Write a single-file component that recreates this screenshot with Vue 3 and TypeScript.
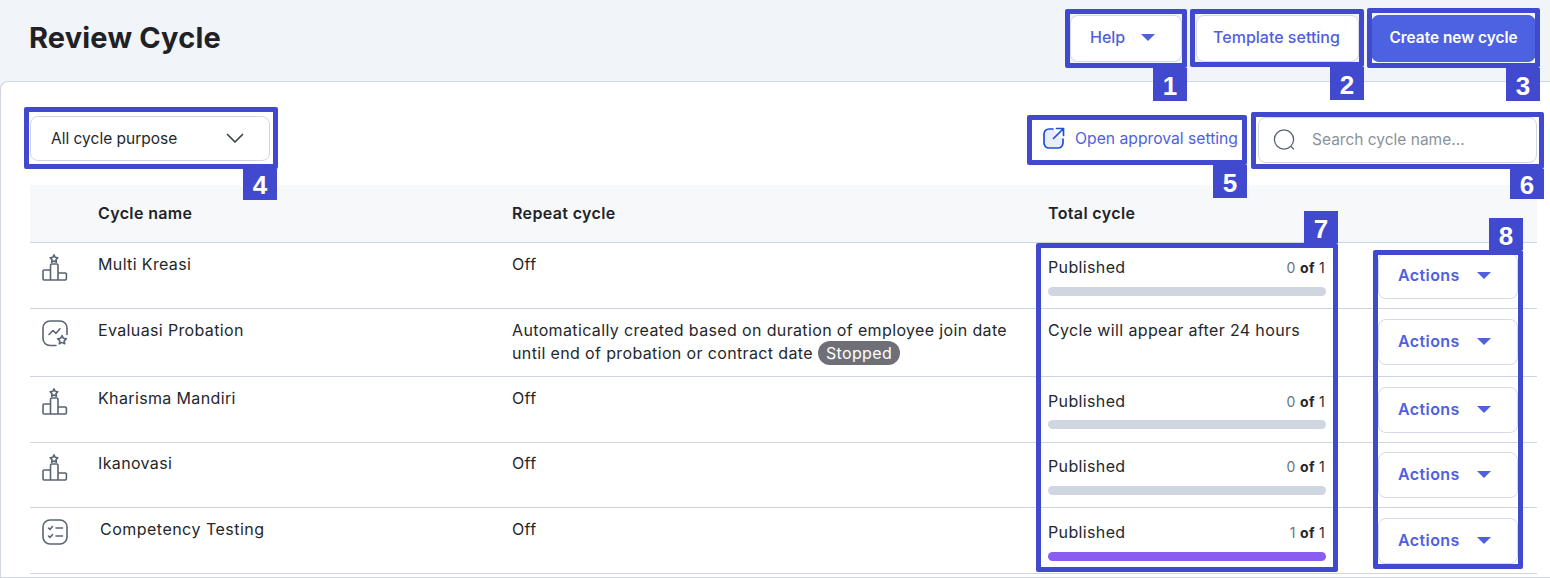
<script setup lang="ts">
interface Row {
  name: string
  icon: 'podium' | 'chart' | 'list'
  repeat: string
  stopped?: boolean
  done?: number
  shifted?: boolean
}

const rows: Row[] = [
  { name: 'Multi Kreasi', icon: 'podium', repeat: 'Off', done: 0 },
  {
    name: 'Evaluasi Probation',
    icon: 'chart',
    repeat: 'Automatically created based on duration of employee join date until end of probation or contract date',
    stopped: true,
  },
  { name: 'Kharisma Mandiri', icon: 'podium', repeat: 'Off', done: 0 },
  { name: 'Ikanovasi', icon: 'podium', repeat: 'Off', done: 0 },
  { name: 'Competency Testing', icon: 'list', repeat: 'Off', done: 1, shifted: true },
]

const marks: number[] = [1, 2, 3, 4, 5, 6, 7, 8]
</script>

<template>
  <div class="page">
    <header class="top">
      <h1 class="title">Review Cycle</h1>
      <div class="top-actions">
        <button class="btn btn-help"><span class="btn-label">Help</span><span class="caret"></span></button>
        <button class="btn btn-template"><span class="btn-label">Template setting</span></button>
        <button class="btn btn-create">Create new cycle</button>
      </div>
    </header>

    <main class="card">
      <div class="toolbar">
        <div class="select">
          <span>All cycle purpose</span>
          <svg class="chevron" width="18" height="11" viewBox="0 0 18 11" fill="none">
            <path d="M1.500 1.500 9 9l7.500-7.500" stroke="#3f444c" stroke-width="1.700" stroke-linecap="round" stroke-linejoin="round" />
          </svg>
        </div>
        <div class="tools">
          <a class="approval">
            <svg width="23" height="23" viewBox="0 0 23 23" fill="none">
              <path d="M11 2H7a5 5 0 0 0-5 5v9a5 5 0 0 0 5 5h9a5 5 0 0 0 5-5v-4" fill="#e9ecfb" stroke="#1f4fd8" stroke-width="1.700" stroke-linecap="round" />
              <path d="M11.500 11.500 21 2M14.500 1.500h7v7" stroke="#1f4fd8" stroke-width="1.700" stroke-linecap="round" stroke-linejoin="round" />
            </svg>
            <span>Open approval setting</span>
          </a>
          <div class="search">
            <svg width="24" height="22" viewBox="0 0 24 22" fill="none">
              <circle cx="11" cy="10.500" r="9.600" stroke="#5b6472" stroke-width="1.300" />
              <path d="M18.500 18 20.500 20" stroke="#5b6472" stroke-width="1.300" stroke-linecap="round" />
            </svg>
            <span>Search cycle name...</span>
          </div>
        </div>
      </div>

      <div class="table">
        <div class="row head">
          <div></div>
          <div>Cycle name</div>
          <div>Repeat cycle</div>
          <div>Total cycle</div>
          <div></div>
        </div>
        <div v-for="row in rows" :key="row.name" class="row body-row">
          <div class="icon-cell">
            <svg v-if="row.icon === 'podium'" width="26" height="27" viewBox="0 0 26 27" fill="none" stroke="#5b6472" stroke-width="1.600" stroke-linejoin="round">
              <path d="M12 .9l1.200 2.400 2.600.4-1.800 1.900.4 2.600-2.400-1.200-2.400 1.200.4-2.600-1.800-1.900 2.600-.4z" />
              <path d="M8.500 16H2.200a1.200 1.200 0 0 0-1.200 1.200v7.600a1.200 1.200 0 0 0 1.200 1.200h21a1.200 1.200 0 0 0 1.200-1.200V20.200a1.200 1.200 0 0 0-1.200-1.200H16" />
              <path d="M8.500 26V11.200A1.200 1.200 0 0 1 9.700 10h5.100A1.200 1.200 0 0 1 16 11.200V26" />
            </svg>
            <svg v-else-if="row.icon === 'chart'" width="26" height="27" viewBox="0 0 26 27" fill="none" stroke="#5b6472" stroke-width="1.600" stroke-linecap="round" stroke-linejoin="round">
              <path d="M14 25.500H8a7 7 0 0 1-7-7V8a7 7 0 0 1 7-7h10a7 7 0 0 1 7 7v6.500" />
              <path d="M7 14.500l4-4 3 2.800 4-4.500" />
              <path d="M20 15.500l1.400 2.800 3 .4-2.200 2.100.5 3-2.700-1.400-2.700 1.400.5-3-2.200-2.100 3-.4z" />
            </svg>
            <svg v-else width="26" height="26" viewBox="0 0 26 26" fill="none" stroke="#5b6472" stroke-width="1.600" stroke-linecap="round" stroke-linejoin="round">
              <rect x="1" y="1" width="24" height="24" rx="7" />
              <path d="M6.500 9l1.500 1.500 2.500-3M14 9h6.500M6.500 17l1.500 1.500 2.500-3M14 17h6.500" />
            </svg>
          </div>
          <div class="name" :class="{ shifted: row.shifted }">{{ row.name }}</div>
          <div class="repeat">
            <span>{{ row.repeat }}</span>
            <span v-if="row.stopped" class="badge">Stopped</span>
          </div>
          <div class="total" :class="{ pending: row.done === undefined }">
            <template v-if="row.done !== undefined">
              <div class="total-line">
                <span>Published</span>
                <span class="count"><span class="num">{{ row.done }}</span> <b>of</b> 1</span>
              </div>
              <div class="bar" :class="{ full: row.done === 1 }"></div>
            </template>
            <template v-else>Cycle will appear after 24 hours</template>
          </div>
          <div class="action-cell">
            <button class="btn btn-actions">Actions<span class="caret"></span></button>
          </div>
        </div>
      </div>
    </main>

    <div v-for="n in marks" :key="n" class="mark" :class="`mark-${n}`">
      <span class="tag">{{ n }}</span>
    </div>
  </div>
</template>

<style scoped>
.page {
  position: relative;
  width: 1550px;
  height: 578px;
  overflow: hidden;
  background: #f1f4f8;
  font-family: Inter, "Noto Sans", sans-serif;
  font-size: 16px;
  letter-spacing: 0.36px;
  color: #24272c;
}
.top {
  display: flex;
  justify-content: space-between;
  align-items: flex-start;
  height: 81px;
  box-sizing: border-box;
  padding: 15px 14px 0 29px;
}
.title {
  margin: 4px 0 0;
  font-size: 29px;
  line-height: 38px;
  font-weight: 700;
  letter-spacing: 0.17px;
  color: #1f2124;
}
.top-actions {
  display: flex;
}
.btn {
  display: flex;
  align-items: center;
  box-sizing: border-box;
  height: 47px;
  background: #fff;
  border: 1px solid #d4d9e4;
  border-radius: 8px;
  font: 500 16px Inter, sans-serif;
  color: #4f5fe0;
  padding: 0 0 2px;
}
.btn-label {
  margin-bottom: 1px;
}
.caret {
  width: 0;
  height: 0;
  border-left: 7.5px solid transparent;
  border-right: 7.5px solid transparent;
  border-top: 7.5px solid #4f5fe0;
}
.btn-help {
  width: 112px;
  padding-left: 19px;
  gap: 16px;
}
.btn-template {
  width: 163px;
  justify-content: center;
  margin-left: 14px;
  padding-right: 2px;
}
.btn-create {
  width: 165px;
  justify-content: center;
  margin-left: 12px;
  background: #4c62e0;
  border-color: #4c62e0;
  color: #fff;
  font-size: 15.4px;
  font-weight: 600;
}
.card {
  height: 497px;
  box-sizing: border-box;
  background: #fff;
  border: 1px solid #d0d7e1;
  border-right: 0;
  border-radius: 8px 0 0 0;
  padding: 0 13px 0 29px;
}
.toolbar {
  display: flex;
  justify-content: space-between;
  align-items: flex-start;
  height: 103px;
  padding-top: 34px;
  box-sizing: border-box;
  font-size: 15.5px;
  letter-spacing: 0;
}
.select {
  display: flex;
  align-items: center;
  justify-content: space-between;
  box-sizing: border-box;
  width: 240px;
  height: 45px;
  border: 1px solid #d0d6e2;
  border-radius: 8px;
  padding: 0 25px 0 20px;
}
.tools {
  display: flex;
  align-items: flex-start;
}
.approval {
  display: flex;
  align-items: center;
  gap: 10px;
  height: 45px;
  color: #4f5fe0;
  font-size: 15.7px;
}
.search {
  display: flex;
  align-items: center;
  gap: 15px;
  box-sizing: border-box;
  width: 279px;
  height: 46px;
  margin: 1px 0 0 20px;
  padding: 0 0 1px 14px;
  border: 1px solid #d0d6e2;
  border-radius: 8px;
  color: #8a919c;
}
.table {
  display: grid;
  grid-template-rows: 58px 66px 68px 66px 65px 66px;
}
.row {
  display: grid;
  grid-template-columns: 68px 414px 536px 278px 1fr;
  box-sizing: border-box;
  border-bottom: 1px solid #cfd6e0;
  line-height: 23px;
}
.head {
  background: #f7f8fa;
  font-weight: 600;
  color: #1f2328;
  padding-top: 17px;
}
.icon-cell {
  padding: 11px 0 0 12px;
}
.icon-cell svg {
  display: block;
}
.name,
.repeat {
  padding-top: 10px;
}
.name.shifted {
  padding-left: 2px;
  letter-spacing: 0.48px;
}
.repeat {
  padding-right: 24px;
}
.badge {
  margin-left: 5px;
  padding: 2.3px 8px;
  background: #6f6f78;
  color: #fff;
  border-radius: 12px;
}
.total {
  padding-top: 13px;
}
.total.pending {
  padding-top: 10px;
}
.total-line {
  display: flex;
  justify-content: space-between;
}
.count {
  padding-right: 1px;
  font-size: 14px;
  letter-spacing: 0.3px;
  color: #24272c;
}
.count .num {
  color: #6b7280;
}
.count b {
  font-weight: 700;
}
.bar {
  height: 9px;
  margin-top: 8px;
  border-radius: 5px;
  background: #cfd6df;
}
.bar.full {
  background: #8b5cf0;
}
.action-cell {
  padding: 10px 0 0 52px;
}
.btn-actions {
  width: 140px;
  height: 46px;
  padding-left: 19px;
  gap: 17px;
  font-weight: 600;
  letter-spacing: 0.4px;
}
/* Fourth data row sits a pixel higher than the others */
.body-row:nth-child(5) .name,
.body-row:nth-child(5) .repeat {
  padding-top: 9px;
}
.body-row:nth-child(5) .total {
  padding-top: 12px;
}
.body-row:nth-child(5) .action-cell {
  padding-top: 9px;
}
.body-row:nth-child(4) .bar {
  margin-top: 7px;
}

.mark {
  position: absolute;
  box-sizing: border-box;
  border: 5px solid #4149cf;
  border-radius: 2px;
  pointer-events: none;
}
.tag {
  position: absolute;
  right: -5px;
  top: calc(100% + 5px);
  width: 34px;
  height: 33px;
  background: #4149cf;
  color: #fff;
  font: 700 26px/36px "Liberation Sans", Arial, sans-serif;
  letter-spacing: 0;
  text-align: center;
}
.mark-1 { left: 1065px; top: 9px; width: 122px; height: 59px; }
.mark-2 { left: 1190px; top: 9px; width: 174px; height: 58px; }
.mark-3 { left: 1367px; top: 8px; width: 173px; height: 60px; }
.mark-4 { left: 24px; top: 107px; width: 254px; height: 62px; }
.mark-5 { left: 1027px; top: 115px; width: 220px; height: 50px; }
.mark-6 { left: 1251px; top: 112px; width: 293px; height: 57px; }
.mark-7 { left: 1036px; top: 243px; width: 302px; height: 329px; }
.mark-8 { left: 1373px; top: 250px; width: 150px; height: 319px; }
.mark-4 .tag {
  right: -4px;
  height: 31px;
  line-height: 33px;
}
.mark-6 .tag {
  height: 30px;
  line-height: 33px;
}
.mark-7 .tag,
.mark-8 .tag {
  top: auto;
  bottom: calc(100% + 5px);
  height: 32px;
}
</style>

<style>
body {
  margin: 0;
  background: #f1f4f8;
}
</style>
